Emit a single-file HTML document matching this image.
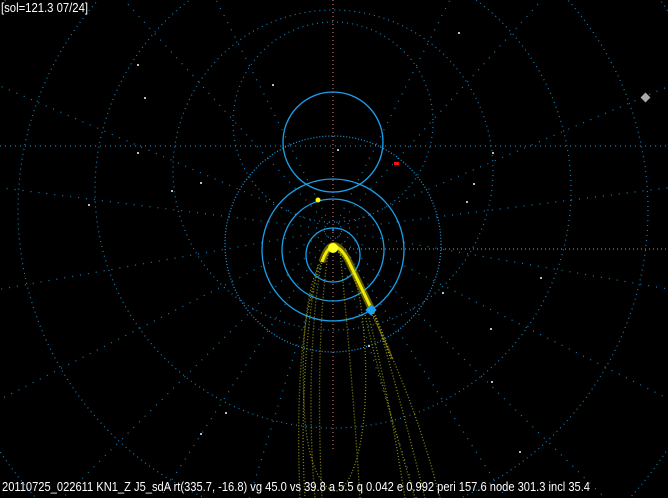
<!DOCTYPE html>
<html><head><meta charset="utf-8"><style>
html,body{margin:0;padding:0;background:#000;overflow:hidden;width:668px;height:498px}
body{position:fixed;top:0;left:0}
svg{display:block;overflow:hidden}
text{font-family:"Liberation Sans","Noto Sans CJK JP",sans-serif;fill:#fff;font-size:13px}
</style></head><body>
<svg width="668" height="498" viewBox="0 0 668 498" xmlns="http://www.w3.org/2000/svg">
<rect width="668" height="498" fill="#000"/>
<g fill="none" stroke="#1a8fd0" stroke-width="1.2" stroke-dasharray="1 4" opacity="0.9">
<circle cx="333" cy="122" r="100"/>
<circle cx="333" cy="170" r="160"/>
<circle cx="333" cy="190" r="238"/>
<circle cx="333" cy="210" r="315"/>
<circle cx="333" cy="230" r="400"/>
<circle cx="333" cy="250" r="490"/>
<line x1="0" y1="146" x2="668" y2="146"/>
</g>
<g stroke="#1a8fd0" stroke-width="1.2" stroke-dasharray="1 7" opacity="0.9">
<line x1="333" y1="230" x2="-60" y2="60"/>
<line x1="333" y1="230" x2="-60" y2="180"/>
<line x1="333" y1="230" x2="-60" y2="300"/>
<line x1="333" y1="230" x2="-60" y2="430"/>
<line x1="333" y1="230" x2="0" y2="560"/>
<line x1="333" y1="230" x2="120" y2="560"/>
<line x1="333" y1="230" x2="230" y2="560"/>
<line x1="333" y1="230" x2="436" y2="560"/>
<line x1="333" y1="230" x2="546" y2="560"/>
<line x1="333" y1="230" x2="668" y2="560"/>
<line x1="333" y1="230" x2="730" y2="430"/>
<line x1="333" y1="230" x2="730" y2="300"/>
<line x1="333" y1="230" x2="730" y2="180"/>
<line x1="333" y1="230" x2="730" y2="60"/>
<line x1="333" y1="230" x2="560" y2="-20"/>
<line x1="333" y1="230" x2="106" y2="-20"/>
<line x1="333" y1="230" x2="460" y2="-20"/>
<line x1="333" y1="230" x2="206" y2="-20"/>
</g>
<g stroke="#e08080" stroke-width="1" stroke-dasharray="1 3">
<line x1="333" y1="0" x2="333" y2="450"/>
<line x1="333" y1="249" x2="668" y2="249"/>
</g>
<g fill="none" stroke="#1aa0ec" stroke-width="1.3">
<circle cx="333" cy="255" r="27"/>
<circle cx="333" cy="250" r="51"/>
<circle cx="333" cy="250" r="71"/>
<circle cx="333" cy="142" r="50"/>
</g>
<circle cx="333" cy="244" r="108" fill="none" stroke="#1aa0ec" stroke-width="1.2" stroke-dasharray="1 2"/>
<g fill="none" stroke="#8a8a10" stroke-width="1.3" stroke-dasharray="1 2">
<path d="M330,250 C305,270 300,350 305,420 C310,480 330,495 340,490 C365,470 372,380 360,300 C352,260 340,250 330,250"/>
<path d="M326,255 C300,300 296,400 300,498"/>
<path d="M322,260 C310,320 308,420 315,498"/>
<path d="M318,265 C305,330 300,420 305,498"/>
<path d="M328,255 C318,320 318,420 322,498"/>
<path d="M372,315 C395,360 420,420 440,498"/>
<path d="M365,315 C380,380 398,440 415,498"/>
<path d="M376,318 C392,370 408,430 425,498"/>
<path d="M369,318 C385,380 396,440 405,498"/>
<path d="M340,252 C348,330 355,420 360,498"/>
</g>
<path d="M322,262 Q332,230 348,260 L372,310" fill="none" stroke="#c8c000" stroke-width="7" opacity="0.5"/>
<path d="M322,262 Q332,232 348,260 L372,310" fill="none" stroke="#f0e800" stroke-width="3"/>
<path d="M372,310 Q385,340 392,360" fill="none" stroke="#a8a010" stroke-width="3" stroke-dasharray="1 2"/>
<circle cx="333" cy="248" r="5" fill="#ffff20"/>
<circle cx="318" cy="200" r="2.5" fill="#ffff00"/>
<rect x="394" y="162" width="5" height="3" fill="#ff1010"/>
<rect x="367" y="306" width="8" height="8" fill="#1ea0f0" transform="rotate(45 371 310)"/>
<rect x="642" y="94" width="7" height="7" fill="#aaa" transform="rotate(45 645.5 97.5)"/>
<g fill="#bbb">
<rect x="137" y="64" width="2" height="2"/><rect x="458" y="32" width="2" height="2"/>
<rect x="144" y="97" width="2" height="2"/><rect x="272" y="84" width="2" height="2"/>
<rect x="337" y="149" width="2" height="2"/><rect x="492" y="152" width="2" height="2"/>
<rect x="200" y="182" width="2" height="2"/><rect x="171" y="190" width="2" height="2"/>
<rect x="473" y="183" width="2" height="2"/><rect x="88" y="204" width="2" height="2"/>
<rect x="466" y="201" width="2" height="2"/><rect x="540" y="277" width="2" height="2"/>
<rect x="368" y="345" width="2" height="2"/><rect x="490" y="328" width="2" height="2"/>
<rect x="225" y="412" width="2" height="2"/><rect x="200" y="433" width="2" height="2"/>
<rect x="519" y="451" width="2" height="2"/><rect x="491" y="381" width="2" height="2"/>
<rect x="442" y="292" width="2" height="2"/><rect x="137" y="152" width="2" height="2"/>
</g>
<text x="1" y="12" textLength="87" lengthAdjust="spacingAndGlyphs">[sol=121.3 07/24]</text>
<text x="2" y="491" textLength="588" lengthAdjust="spacingAndGlyphs">20110725_022611  KN1_Z  J5_sdA rt(335.7, -16.8) vg 45.0 vs 39.8 a 5.5 q 0.042 e 0.992 peri 157.6 node 301.3 incl 35.4</text>
</svg>
</body></html>
